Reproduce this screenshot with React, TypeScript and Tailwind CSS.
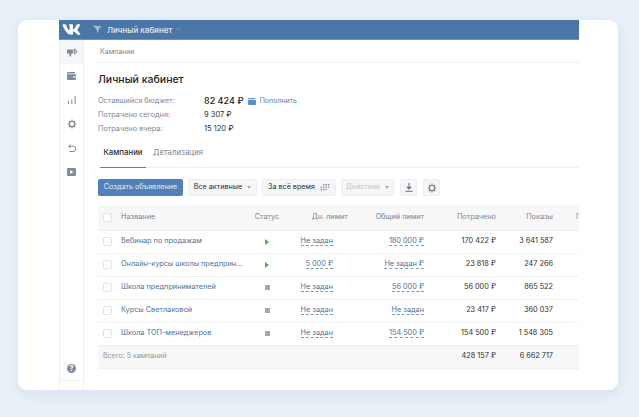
import React from "react";
import { FaVk } from "react-icons/fa";
import { ChevronDown } from "lucide-react";

const rows = [
  { name: "Вебинар по продажам", on: true, day: "Не задан", total: "180 000 ₽", spent: "170 422 ₽", shows: "3 641 587" },
  { name: "Онлайн-курсы школы предприн...", on: true, day: "5 000 ₽", total: "Не задан ₽", spent: "23 818 ₽", shows: "247 266" },
  { name: "Школа предпринимателей", on: false, day: "Не задан", total: "56 000 ₽", spent: "56 000 ₽", shows: "865 522" },
  { name: "Курсы Светлаковой", on: false, day: "Не задан", total: "Не задан", spent: "23 417 ₽", shows: "360 037" },
  { name: "Школа ТОП-менеджеров", on: false, day: "Не задан", total: "154 500 ₽", spent: "154 500 ₽", shows: "1 548 305" },
];

const Caret = () => <span className="ml-[5px] w-0 h-0 border-x-[2.5px] border-x-transparent border-t-[3px] border-t-[#a5acb5]" />;

const Gear = () => (
  <svg width="10" height="10" viewBox="0 0 12 12" fill="none">
    <circle cx="6" cy="6" r="3.2" stroke="#818c99" strokeWidth="1.7" />
    <path d="M6 .6v1.6M6 9.8v1.6M.6 6h1.6M9.8 6h1.6M2.2 2.2l1.1 1.1M8.7 8.7l1.1 1.1M2.2 9.8l1.1-1.1M8.7 3.3l1.1-1.1" stroke="#818c99" strokeWidth="1.4" />
  </svg>
);

const Checkbox = () => <span className="block w-[9px] h-[9px] rounded-[2px] border border-[#dfe2e6] bg-white" />;

const Button = ({ children, className }: { children: React.ReactNode; className?: string }) => (
  <div className={`h-[17px] flex items-center justify-center rounded-[2px] border border-[#eceef0] bg-[#f5f6f8] ${className}`}>{children}</div>
);

const Limit = ({ children }: { children: React.ReactNode }) => (
  <span className="text-[#4f7198] border-b border-dashed border-[#7e9abb] leading-[9px]">{children}</span>
);

const App = () => {
  return (
    <div className="w-[639px] h-[417px] overflow-hidden bg-[#e9f0f8] pt-[20px] pl-[18px] text-[8px] text-[#2c2d2e] [font-family:Inter,'Liberation_Sans',sans-serif]">
      <div className="w-[600px] h-[370px] overflow-hidden rounded-[9px] bg-white pl-[41px] pr-[39px] shadow-[0_4px_14px_rgba(170,190,220,0.3)]">
        {/* Top bar */}
        <div className="h-[20px] bg-[#4a76a8] flex items-center border-b border-[#6f93bb]">
          <div className="w-[25px] flex justify-center">
            <FaVk className="text-white w-[19px] h-[19px]" />
          </div>
          <svg className="ml-[9px]" width="9" height="9" viewBox="0 0 9 9">
            <path d="M0 .5 9 1.5 6 3.6 4.8 8.6 3.4 4.2Z" fill="#a9bfd8" />
          </svg>
          <span className="ml-[5px] text-[8px] font-medium text-[#e4ebf3]">Личный кабинет</span>
          <ChevronDown className="ml-[3px] w-[7px] h-[7px] text-[#a9bfd8]" />
        </div>

        <div className="flex h-[350px]">
          {/* Sidebar */}
          <div className="w-[25px] shrink-0 flex flex-col border-x border-[#eef0f2] text-[#818c99]">
            <div className="h-[24px] bg-[#f5f6f8] flex items-center justify-center">
              <svg width="10" height="9" viewBox="0 0 10 9" fill="#818c99">
                <path d="M0 1.5h6.2V5.6H4.4L4 8.4H2.6L2.2 5.6H0ZM7 1 8.4.2v6.6L7 6ZM9.2 2h.8v3h-.8Z" />
              </svg>
            </div>
            <div className="h-[24px] flex items-center justify-center">
              <svg width="9" height="8" viewBox="0 0 9 8" fill="#818c99">
                <path d="M1 0h7v1.5H0V1a1 1 0 0 1 1-1ZM0 2.2h9V7a1 1 0 0 1-1 1H1a1 1 0 0 1-1-1Z" />
                <rect x="6" y="4" width="3" height="2" fill="#c5cad1" />
              </svg>
            </div>
            <div className="h-[24px] flex items-center justify-center">
              <svg width="8" height="8" viewBox="0 0 8 8" fill="#818c99">
                <rect x="0" y="5" width="1" height="3" />
                <rect x="3.3" y="3.4" width="1" height="4.6" />
                <rect x="6.6" y="0" width="1" height="8" />
              </svg>
            </div>
            <div className="h-[24px] flex items-center justify-center"><Gear /></div>
            <div className="h-[24px] flex items-center justify-center">
              <svg width="8" height="9" viewBox="0 0 8 9" fill="none" stroke="#818c99" strokeWidth="1">
                <path d="M2.5.5.7 2.3l1.8 1.8M.9 2.3h4.3a2.2 2.2 0 0 1 0 5.2H1.5" />
              </svg>
            </div>
            <div className="h-[24px] flex items-center justify-center">
              <svg width="9" height="8" viewBox="0 0 9 8">
                <rect width="9" height="8" rx="1.2" fill="#818c99" />
                <path d="M3.2 2 6.4 4 3.2 6Z" fill="#fff" />
              </svg>
            </div>
            <div className="mt-auto h-[24px] flex items-center justify-center">
              <div className="w-[9px] h-[9px] rounded-full bg-[#818c99] text-white text-[7px] font-bold leading-[9px] text-center">?</div>
            </div>
            <div className="h-[10px] border-t border-[#eef0f2]" />
          </div>

          {/* Main */}
          <div className="flex-1 min-w-0 pl-[14px]">
            <div className="h-[23px] flex items-center pl-[2px] pt-[2px] border-b border-[#eef0f2] text-[7px] text-[#7c8691]">Кампании</div>

            <h1 className="mt-[10px] text-[10.5px] leading-[14px] font-medium text-[#222]">Личный кабинет</h1>

            <div className="mt-[7px] flex items-center h-[14px]">
              <span className="w-[106px] text-[7.3px] text-[#7c8691]">Оставшийся бюджет:</span>
              <span className="text-[9px] font-medium text-[#222]">82 424 ₽</span>
              <svg className="ml-[4px]" width="8" height="7" viewBox="0 0 9 8" fill="#5b8cc4">
                <path d="M1 0h7v1.5H0V1a1 1 0 0 1 1-1ZM0 2.2h9V7a1 1 0 0 1-1 1H1a1 1 0 0 1-1-1Z" />
              </svg>
              <span className="ml-[4px] text-[7px] text-[#4f7fb3]">Пополнить</span>
            </div>
            <div className="flex items-center h-[14px]">
              <span className="w-[106px] text-[7.3px] text-[#7c8691]">Потрачено сегодня:</span>
              <span className="text-[7.5px] text-[#2c2d2e]">9 307 ₽</span>
            </div>
            <div className="flex items-center h-[14px]">
              <span className="w-[106px] text-[7.3px] text-[#7c8691]">Потрачено вчера:</span>
              <span className="text-[7.5px] text-[#2c2d2e]">15 120 ₽</span>
            </div>

            {/* Tabs */}
            <div className="mt-[3px] ml-[2px] h-[29px] flex items-stretch border-b border-[#eef0f2] text-[7.8px]">
              <div className="w-[46px] flex items-center justify-center font-medium border-b border-[#5181b8] -mb-px">Кампании</div>
              <div className="ml-[7px] flex items-center text-[#7c8691]">Детализация</div>
            </div>

            {/* Toolbar */}
            <div className="mt-[11px] flex items-center text-[7.2px]">
              <div className="w-[85px] h-[17px] rounded-[2px] bg-[#5181b8] text-[#e6edf5] flex items-center justify-center">Создать объявление</div>
              <Button className="ml-[5px] w-[69px] text-[#2c2d2e]">Все активные<Caret /></Button>
              <Button className="ml-[5px] w-[74px] text-[#2c2d2e]">
                За всё время
                <svg className="ml-[4px]" width="11" height="8" viewBox="0 0 11 8" fill="#818c99">
                  <path d="M4 0h1.4v1.4H4ZM6.4 0h1.4v1.4H6.4ZM8.8 0h1.4v1.4H8.8ZM1.6 2.4H3v1.4H1.6ZM4 2.4h1.4v1.4H4ZM6.4 2.4h1.4v1.4H6.4ZM8.8 2.4h1.4v1.4H8.8ZM1.6 4.8H3v1.4H1.6ZM4 4.8h1.4v1.4H4ZM6.4 4.8h1.4v1.4H6.4Z" />
                </svg>
              </Button>
              <Button className="ml-[5px] w-[53px] text-[#c1c5ca]">Действия<Caret /></Button>
              <Button className="ml-[6px] w-[17px]">
                <svg width="8" height="9" viewBox="0 0 8 9" fill="none" stroke="#656e78" strokeWidth="1.1">
                  <path d="M4 0v5.6M1.7 3.6 4 6l2.3-2.4M.5 8.2h7" />
                </svg>
              </Button>
              <Button className="ml-[6px] w-[17px]"><Gear /></Button>
            </div>

            {/* Table */}
            <table className="mt-[9px] w-full table-fixed border-collapse text-[7.3px]">
              <colgroup>
                <col className="w-[23px]" />
                <col className="w-[128px]" />
                <col className="w-[36px]" />
                <col className="w-[63px]" />
                <col className="w-[76px]" />
                <col className="w-[72px]" />
                <col className="w-[57px]" />
                <col />
              </colgroup>
              <thead>
                <tr className="h-[25px] bg-[#f7f7f8] border-b border-[#eef0f2] text-[#7c8691]">
                  <th className="font-normal"><div className="pl-[5px]"><Checkbox /></div></th>
                  <th className="font-normal text-left">Название</th>
                  <th className="font-normal text-center">Статус</th>
                  <th className="font-normal text-right whitespace-nowrap">Дн. лимит</th>
                  <th className="font-normal text-right">Общий лимит</th>
                  <th className="font-normal text-right">Потрачено</th>
                  <th className="font-normal text-right">Показы</th>
                  <th className="font-normal text-left overflow-hidden whitespace-nowrap pl-[23px]">П</th>
                </tr>
              </thead>
              <tbody>
                {rows.map((row) => (
                  <tr key={row.name} className="h-[23px] border-b border-[#f0f2f4]">
                    <td><div className="pl-[5px]"><Checkbox /></div></td>
                    <td className="text-[#4f7198] whitespace-nowrap">{row.name}</td>
                    <td>
                      <div className="flex justify-center">
                        {row.on ? (
                          <span className="w-0 h-0 border-y-[3px] border-y-transparent border-l-[4px] border-l-[#4bb34b]" />
                        ) : (
                          <span className="w-[5px] h-[5px] bg-[#a3a9b0]" />
                        )}
                      </div>
                    </td>
                    <td className="text-right whitespace-nowrap pr-[15px]"><Limit>{row.day}</Limit></td>
                    <td className="text-right whitespace-nowrap"><Limit>{row.total}</Limit></td>
                    <td className="text-right whitespace-nowrap">{row.spent}</td>
                    <td className="text-right whitespace-nowrap">{row.shows}</td>
                    <td />
                  </tr>
                ))}
                <tr className="h-[23px] bg-[#f7f7f8] border-b border-[#eef0f2]">
                  <td colSpan={2} className="pl-[5px] text-[7px] text-[#8e96a0]">Всего: 5 кампаний</td>
                  <td colSpan={3} />
                  <td className="text-right">428 157 ₽</td>
                  <td className="text-right">6 662 717</td>
                  <td />
                </tr>
              </tbody>
            </table>
          </div>
        </div>
      </div>
    </div>
  );
};

export default App;
